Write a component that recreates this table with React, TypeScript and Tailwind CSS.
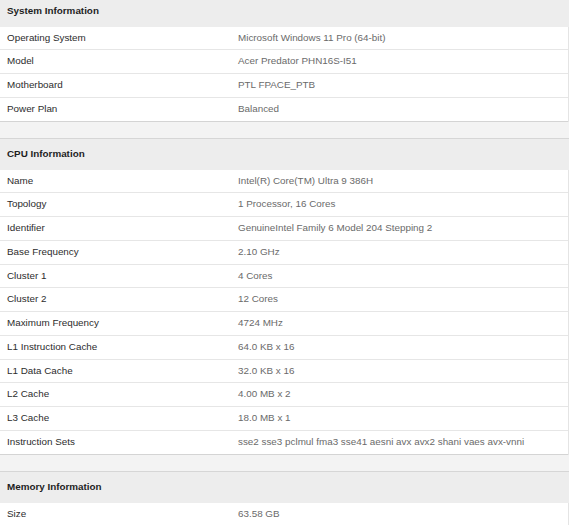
const sections: { title: string; rows: [string, string][] }[] = [
  {
    title: "System Information",
    rows: [
      ["Operating System", "Microsoft Windows 11 Pro (64-bit)"],
      ["Model", "Acer Predator PHN16S-I51"],
      ["Motherboard", "PTL FPACE_PTB"],
      ["Power Plan", "Balanced"],
    ],
  },
  {
    title: "CPU Information",
    rows: [
      ["Name", "Intel(R) Core(TM) Ultra 9 386H"],
      ["Topology", "1 Processor, 16 Cores"],
      ["Identifier", "GenuineIntel Family 6 Model 204 Stepping 2"],
      ["Base Frequency", "2.10 GHz"],
      ["Cluster 1", "4 Cores"],
      ["Cluster 2", "12 Cores"],
      ["Maximum Frequency", "4724 MHz"],
      ["L1 Instruction Cache", "64.0 KB x 16"],
      ["L1 Data Cache", "32.0 KB x 16"],
      ["L2 Cache", "4.00 MB x 2"],
      ["L3 Cache", "18.0 MB x 1"],
      ["Instruction Sets", "sse2 sse3 pclmul fma3 sse41 aesni avx avx2 shani vaes avx-vnni"],
    ],
  },
  {
    title: "Memory Information",
    rows: [["Size", "63.58 GB"]],
  },
];

function Section({ title, rows, first }: { title: string; rows: [string, string][]; first: boolean }) {
  return (
    <div className={first ? "" : "border-t border-[#d6d6d6]"}>
      <div
        className={`flex items-center bg-[#ededed] px-[7px] font-bold text-[#1e1e1e] ${
          first ? "h-[26.7px] pb-[3px]" : "h-[31px]"
        }`}
      >
        {title}
      </div>
      <div className="border-r border-[#e4e4e4] bg-white">
        {rows.map(([label, value], i) => (
          <div
            key={label}
            className={`flex h-[23.75px] items-center border-b ${
              i === rows.length - 1 ? "border-[#d4d4d4]" : "border-[#e6e6e6]"
            }`}
          >
            <div className="w-[238px] shrink-0 pl-[7px] text-[#2c2c2c]">{label}</div>
            <div className="text-[#6a6a6a]">{value}</div>
          </div>
        ))}
      </div>
    </div>
  );
}

export default function App() {
  return (
    <div
      className="h-[525px] w-[569px] overflow-hidden bg-[#f3f3f3] text-[9.85px]"
      style={{ fontFamily: '"Liberation Sans", Arial, sans-serif' }}
    >
      {sections.map((s, i) => (
        <div key={s.title}>
          {i > 0 && <div className="h-[16px] bg-[#f3f3f3]" />}
          <Section title={s.title} rows={s.rows} first={i === 0} />
        </div>
      ))}
    </div>
  );
}
